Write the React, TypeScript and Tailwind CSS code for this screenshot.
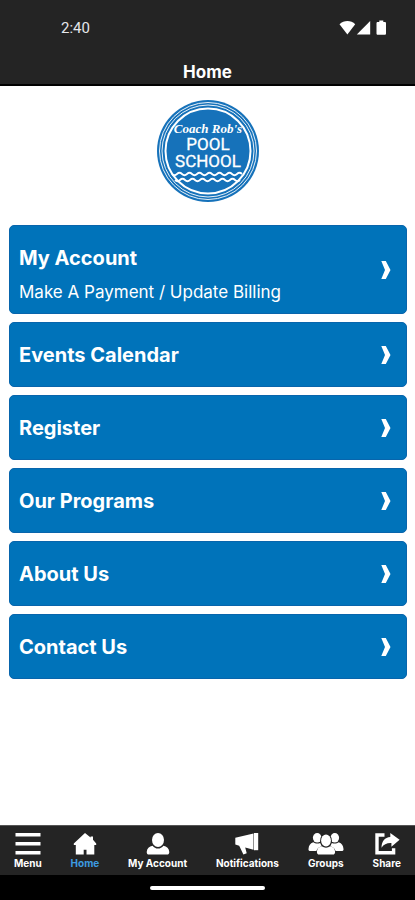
import type { ReactNode } from "react";

type Card = { title: string; subtitle?: string };
type Tab = { label: string; icon: ReactNode; active?: boolean };

const cards: Card[] = [
  { title: "My Account", subtitle: "Make A Payment / Update Billing" },
  { title: "Events Calendar" },
  { title: "Register" },
  { title: "Our Programs" },
  { title: "About Us" },
  { title: "Contact Us" },
];

const tabs: Tab[] = [
  {
    label: "Menu",
    icon: (
      <svg viewBox="0 0 26 22" className="h-[22px] w-[26px]" fill="currentColor" aria-hidden="true">
        <path d="M0.5 0h25v3.6h-25zM0.5 9h25v3.6h-25zM0.5 18h25v3.6h-25z" />
      </svg>
    ),
  },
  {
    label: "Home",
    active: true,
    icon: (
      <svg viewBox="0 0 24 22" className="h-[22px] w-6" fill="currentColor" aria-hidden="true">
        <path d="M12 0 17.600 4.500V3.400h2.400v3.300L23.200 10.500v1.600H21.300V21.500H13.500v-4.800H10.700v4.800H2.800V12.100H.8V10.500z" />
      </svg>
    ),
  },
  {
    label: "My Account",
    icon: (
      <svg viewBox="0 0 24 22" className="h-[22px] w-6" fill="currentColor" aria-hidden="true">
        <ellipse cx="12" cy="7" rx="6" ry="7" />
        <path d="M6.6 12.8c1.4 1.9 3.2 2.8 5.4 2.8s4-.9 5.4-2.8c3.4.7 5.6 2.7 5.9 6.200 0 1.700-.8 2.600-2.300 2.600H3c-1.500 0-2.300-.9-2.300-2.600.3-3.500 2.500-5.500 5.900-6.200z" />
      </svg>
    ),
  },
  {
    label: "Notifications",
    icon: (
      <svg viewBox="0 0 24 22" className="h-[22px] w-6" fill="currentColor" aria-hidden="true">
        <path d="M0.300 4.800 18.500 0.400v16.400L10.200 14.600l1.500 5.600-3.300 1.400-4.200-8.800L0.300 11.600z" />
        <path d="M19 0h4.200v17.200h-4.200z" />
      </svg>
    ),
  },
  {
    label: "Groups",
    icon: (
      <svg viewBox="0 0 36 22" className="h-[22px] w-9" fill="currentColor" aria-hidden="true">
        <ellipse cx="9.200" cy="4.800" rx="4.300" ry="4.800" />
        <ellipse cx="26.800" cy="4.800" rx="4.300" ry="4.800" />
        <path d="M5.200 9.300c2 1.500 4.800 1.700 7 .6l1.500 3.400c-2.800.8-4.600 2-5.300 4.700H2.500C1 18 .3 17.300.5 15.900c.3-3.300 1.700-5.600 4.700-6.600zM30.800 9.300c-2 1.500-4.800 1.700-7 .6l-1.500 3.400c2.800.8 4.600 2 5.300 4.700h5.900c1.500 0 2.200-.7 2-2.100-.3-3.300-1.700-5.600-4.700-6.600z" />
        <ellipse cx="18" cy="7.400" rx="5.800" ry="6.800" fill="#242424" />
        <ellipse cx="18" cy="7.600" rx="4.900" ry="6" />
        <path d="M13.700 13.200c2.700 1.900 5.900 1.900 8.600 0 3 .7 4.600 2.400 4.800 5.600 0 1.900-.7 2.800-2.300 2.800H11.200c-1.600 0-2.300-.9-2.300-2.800.2-3.200 1.800-4.900 4.800-5.600z" />
      </svg>
    ),
  },
  {
    label: "Share",
    icon: (
      <svg viewBox="0 0 26 22" className="h-[22px] w-[26px]" fill="currentColor" aria-hidden="true">
        <path d="M10.500 2H3v17.800h16.600v-4.600" fill="none" stroke="currentColor" strokeWidth="3.400" />
        <path d="M16.300 0 25.600 6.700l-8.200 7.100v-3.700c-4.700-.2-7.500 1.300-9.900 4.600.2-6.400 3.300-10.300 8.800-10.600z" />
      </svg>
    ),
  },
];

function Logo() {
  return (
    <svg viewBox="0 0 102 102" className="size-[102px]" role="img" aria-label="Coach Rob's Pool School">
      <circle cx="51" cy="51" r="51" fill="#1672ba" />
      <g fill="none" stroke="#fff">
        <circle cx="51" cy="51" r="48.500" strokeWidth="0.900" />
        <circle cx="51" cy="51" r="46" strokeWidth="0.900" />
        <circle cx="51" cy="51" r="42.500" strokeWidth="2" />
      </g>
      <g fill="#fff" textAnchor="middle">
        <text x="51" y="33" className="font-['Liberation_Serif',serif] text-[13px] font-bold italic">
          Coach Rob's
        </text>
        <g className="font-[Roboto,sans-serif] text-[17px]" stroke="#fff" strokeWidth="0.300">
          <text x="51" y="50">POOL</text>
          <text x="51" y="67">SCHOOL</text>
        </g>
      </g>
      <g fill="none" stroke="#fff" strokeWidth="1.800">
        <path d="M15 74q2.500 2.400 5 0t5 0 5 0 5 0 5 0 5 0 5 0 5 0 5 0 5 0 5 0 5 0 5 0 5 0" />
        <path d="M18 80q2.500 2.400 5 0t5 0 5 0 5 0 5 0 5 0 5 0 5 0 5 0 5 0 5 0 5 0 5 0" />
      </g>
    </svg>
  );
}

function StatusIcons() {
  return (
    <svg viewBox="0 0 48 16" className="h-4 w-12" fill="#fff" aria-hidden="true">
      <path d="M0.500 4.200C5-.2 12-.2 16.200 4.200L8.400 14.400z" />
      <path d="M31.200 1v13.500H17.800z" />
      <path d="M40.300 0.500h4v1.400h1.400c.8 0 1.300.5 1.300 1.300v10.200c0 .8-.5 1.300-1.300 1.300h-6.900c-.8 0-1.300-.5-1.300-1.300V3.200c0-.8.5-1.300 1.300-1.300h1.500z" />
    </svg>
  );
}

function CardButton({ title, subtitle }: Card) {
  return (
    <button
      type="button"
      className={`flex w-full items-center justify-between rounded-[5px] border border-[#0865ac] bg-[#0073ba] pr-[15px] pl-[9px] text-left text-white ${
        subtitle ? "h-[89px]" : "h-[65px]"
      }`}
    >
      <span className={`flex flex-col gap-1 ${subtitle ? "pt-2" : ""}`}>
        <span className="text-[20px] leading-8 font-bold">{title}</span>
        {subtitle && <span className="text-[17px] leading-7">{subtitle}</span>}
      </span>
      <svg viewBox="0 0 10 18" className="h-[18px] w-[10px]" fill="currentColor" aria-hidden="true">
        <path d="M0.300 0H4.800L9.500 9 4.800 18H0.300L4 9z" />
      </svg>
    </button>
  );
}

export default function App() {
  return (
    <div className="flex min-h-screen flex-col bg-white font-[Inter,sans-serif]">
      <header className="border-b-2 border-black bg-[#242424] text-white">
        <div className="flex h-14 items-center justify-between pr-7 pl-[61px]">
          <span className="font-[Roboto,sans-serif] text-[15px] text-gray-200">2:40</span>
          <StatusIcons />
        </div>
        <h1 className="pt-1 text-center text-[17px] leading-6 font-bold">Home</h1>
      </header>

      <main className="flex flex-1 flex-col px-2 pt-3.5">
        <div className="flex justify-center pb-[23px]">
          <Logo />
        </div>
        <div className="flex flex-col gap-2 pl-px">
          {cards.map((card) => (
            <CardButton key={card.title} {...card} />
          ))}
        </div>
      </main>

      <nav className="flex h-[50px] items-start justify-between border-t border-[#555] bg-[#242424] px-3.5 pt-[7px]">
        {tabs.map((tab) => (
          <a key={tab.label} href="#" className="flex flex-col items-center gap-0.5 text-white">
            {tab.icon}
            <span className={`text-[10px] leading-3 font-bold ${tab.active ? "text-[#3d9be0]" : ""}`}>
              {tab.label}
            </span>
          </a>
        ))}
      </nav>
      <div className="flex h-[25px] items-center justify-center bg-black">
        <div className="h-1 w-[115px] rounded-full bg-white" />
      </div>
    </div>
  );
}
